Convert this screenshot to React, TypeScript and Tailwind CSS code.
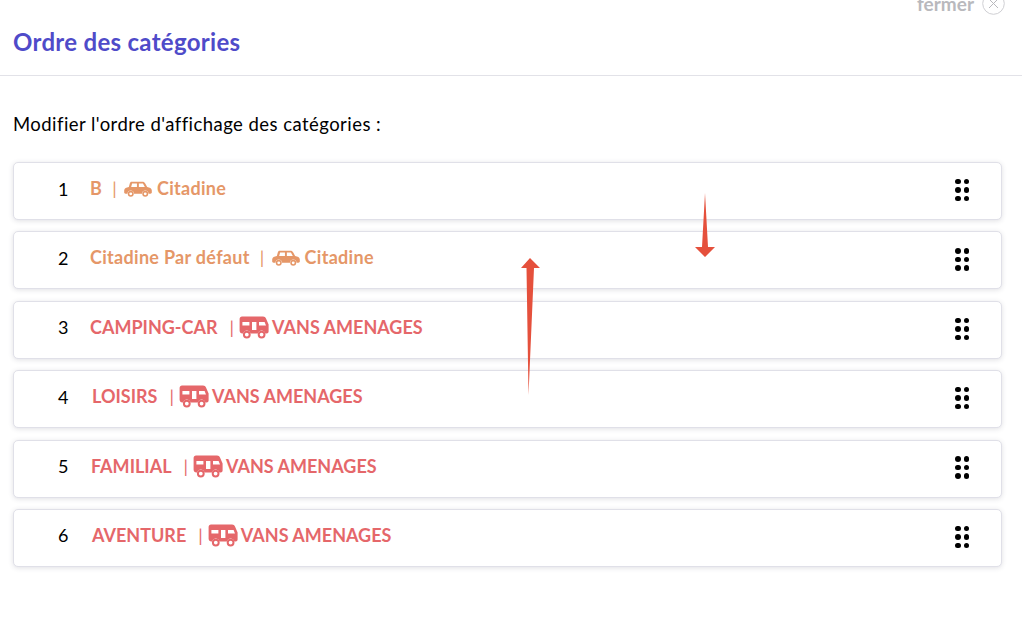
import React from 'react';

const font = { fontFamily: 'Lato, "Liberation Sans", sans-serif' };

const CarIcon = () => (
  <svg width="28" height="16" viewBox="0 0 29 16" className="shrink-0">
    <path
      fill="#e59768"
      fillRule="evenodd"
      d="M8 0.5 H19 C20.5 0.5 21.3 1.2 22 2.4 L24 6 C26.6 6.4 28.6 7.4 28.8 9.4 V11.6 C28.8 12.4 28.2 12.8 27.4 12.8 H25.4 C25.2 10.8 23.8 9.6 22 9.6 C20.2 9.6 18.8 10.8 18.6 12.8 H10.4 C10.2 10.8 8.8 9.6 7 9.6 C5.2 9.6 3.8 10.8 3.6 12.8 H1.6 C0.8 12.8 0.2 12.4 0.2 11.6 V9.4 C0.4 7.4 2.4 6.4 5 6 L6 2.4 C6.4 1.2 6.8 0.5 8 0.5 Z M8.4 2.4 L7.4 6 H13.4 V2.4 Z M15.4 2.4 V6 H21.6 L19.6 2.4 Z"
    />
    <circle cx="7" cy="13" r="2.3" fill="none" stroke="#e59768" strokeWidth="1.6" />
    <circle cx="22" cy="13" r="2.3" fill="none" stroke="#e59768" strokeWidth="1.6" />
  </svg>
);

const VanIcon = () => (
  <svg width="30" height="23" viewBox="0 0 30 23" className="shrink-0">
    <path
      fill="#e5676a"
      fillRule="evenodd"
      d="M3 0.5 H24 C25.5 0.5 26.5 1.4 27 2.6 L29.6 8.6 V15.5 C29.6 16.8 28.8 17.5 27.6 17.5 H26.4 C25.8 15.6 24.2 14.6 22.6 14.6 C21 14.6 19.4 15.6 18.8 17.5 H11.6 C11 15.6 9.4 14.6 7.8 14.6 C6.2 14.6 4.6 15.6 4 17.5 H3.4 C1.8 17.5 0.6 16.4 0.6 14.8 V3 C0.6 1.4 1.6 0.5 3 0.5 Z M3.4 6 V9.6 H10.4 V6 Z M13 6 V14 H17.4 V6 Z M20 6 V9.6 H27 L25.6 6 Z"
    />
    <circle cx="7.8" cy="18.6" r="2.9" fill="#fff" stroke="#e5676a" strokeWidth="2" />
    <circle cx="22.6" cy="18.6" r="2.9" fill="#fff" stroke="#e5676a" strokeWidth="2" />
  </svg>
);

const GripDots = () => (
  <div className="grid grid-cols-2 gap-x-[3px] gap-y-[3px] -mt-[2px]">
    {[0, 1, 2, 3, 4, 5].map((d) => (
      <span key={d} className="w-[5.5px] h-[5.5px] rounded-full bg-black" />
    ))}
  </div>
);

const rows = [
  { n: 1, label: 'B', type: 'Citadine', van: false, indent: '' },
  { n: 2, label: 'Citadine Par défaut', type: 'Citadine', van: false, indent: '' },
  { n: 3, label: 'CAMPING-CAR', type: 'VANS AMENAGES', van: true, indent: '' },
  { n: 4, label: 'LOISIRS', type: 'VANS AMENAGES', van: true, indent: 'ml-[2px]' },
  { n: 5, label: 'FAMILIAL', type: 'VANS AMENAGES', van: true, indent: 'ml-[1px]' },
  { n: 6, label: 'AVENTURE', type: 'VANS AMENAGES', van: true, indent: 'ml-[2px]' },
];

export default function App() {
  return (
    <div className="relative w-[1022px] h-[625px] bg-white overflow-hidden" style={font}>
      <header className="relative h-[76px] border-b border-[#e2e2e8] pl-[13px] pt-[27px]">
        <h1 className="text-[24px] leading-[30px] font-bold tracking-[0.3px] text-[#4f4bc9]">Ordre des catégories</h1>
        <div className="absolute right-[17px] -top-[8px] flex items-center gap-[8px]">
          <span className="text-[19px] leading-[22px] font-bold text-[#b9b9bd]">fermer</span>
          <svg width="23" height="23" viewBox="0 0 23 23">
            <circle cx="11.5" cy="11.5" r="10.8" fill="none" stroke="#cfcfd3" strokeWidth="1" />
            <path d="M7 7 L16 16 M16 7 L7 16" stroke="#b9b9bd" strokeWidth="1" />
          </svg>
        </div>
      </header>

      <main className="px-[13px] pr-[20px] pt-[36px]">
        <p className="text-[18.5px] leading-[24px] tracking-[0.45px] text-black">Modifier l'ordre d'affichage des catégories :</p>
        <ul className="mt-[26px] flex flex-col gap-[11.4px]">
          {rows.map((row) => (
            <li
              key={row.n}
              className="h-[58px] flex items-center rounded-[5px] border border-[#e0e0e8] bg-white shadow-[0_1px_5px_rgba(60,60,90,0.16)] pl-[44px] pr-[32px]"
            >
              <span className="w-[32px] text-[18px] text-black -mt-[4px]">{row.n}</span>
              <div
                className={`flex items-center text-[18px] font-bold -mt-[5px] ${
                  row.van ? 'text-[#e5676a]' : 'text-[#e59768] tracking-[0.3px]'
                } ${row.indent}`}
              >
                <span>{row.label}</span>
                <span className={`font-normal ${row.van ? 'ml-[12px] mr-[5px]' : 'ml-[10px] mr-[7px]'}`}>|</span>
                {row.van ? <VanIcon /> : <CarIcon />}
                <span className={row.van ? 'ml-[3px]' : 'ml-[5px]'}>{row.type}</span>
              </div>
              <div className="ml-auto">
                <GripDots />
              </div>
            </li>
          ))}
        </ul>
      </main>

      {/* annotation arrows */}
      <svg width="1022" height="625" className="absolute inset-0 pointer-events-none">
        <path fill="#e5503c" d="M705 193 L708 247 L715 247 L705 257 L695 247 L702 247 Z" />
        <path fill="#e5503c" d="M530 258 L540 268 L534 268 L528.5 395 L526.5 268 L521 268 Z" />
      </svg>
    </div>
  );
}
